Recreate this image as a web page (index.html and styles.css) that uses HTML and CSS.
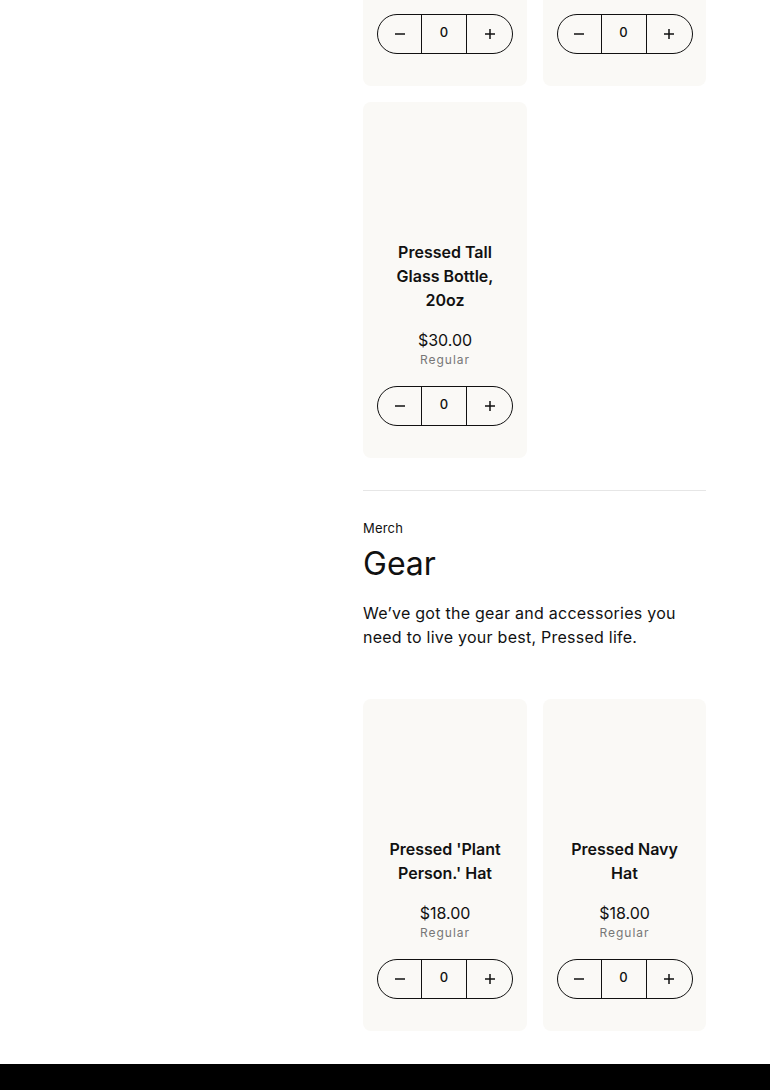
FILE: index.html
```html
<!DOCTYPE html>
<html lang="en">
<head>
<meta charset="utf-8">
<title>Pressed Shop</title>
<link rel="stylesheet" href="styles.css">
</head>
<body>
<div class="page">
  <aside class="sidebar"></aside>
  <main class="main">
    <section class="section">
      <div class="grid">
        <div class="card card-partial">
          <div class="qty">
            <button class="qty-btn" aria-label="Decrease"><svg width="12" height="12" viewBox="0 0 12 12"><path d="M1 6h10" stroke="#111" stroke-width="1.5"/></svg></button>
            <span class="qty-val">0</span>
            <button class="qty-btn" aria-label="Increase"><svg width="12" height="12" viewBox="0 0 12 12"><path d="M1 6h10M6 1v10" stroke="#111" stroke-width="1.5"/></svg></button>
          </div>
        </div>
        <div class="card card-partial">
          <div class="qty">
            <button class="qty-btn" aria-label="Decrease"><svg width="12" height="12" viewBox="0 0 12 12"><path d="M1 6h10" stroke="#111" stroke-width="1.5"/></svg></button>
            <span class="qty-val">0</span>
            <button class="qty-btn" aria-label="Increase"><svg width="12" height="12" viewBox="0 0 12 12"><path d="M1 6h10M6 1v10" stroke="#111" stroke-width="1.5"/></svg></button>
          </div>
        </div>
        <div class="card">
          <div class="card-media"></div>
          <h3 class="card-title">Pressed Tall Glass Bottle, 20oz</h3>
          <div class="card-price">$30.00</div>
          <div class="card-variant">Regular</div>
          <div class="qty">
            <button class="qty-btn" aria-label="Decrease"><svg width="12" height="12" viewBox="0 0 12 12"><path d="M1 6h10" stroke="#111" stroke-width="1.5"/></svg></button>
            <span class="qty-val">0</span>
            <button class="qty-btn" aria-label="Increase"><svg width="12" height="12" viewBox="0 0 12 12"><path d="M1 6h10M6 1v10" stroke="#111" stroke-width="1.5"/></svg></button>
          </div>
        </div>
      </div>
    </section>

    <hr class="divider">

    <section class="section">
      <div class="eyebrow">Merch</div>
      <h2 class="heading">Gear</h2>
      <p class="lead">We’ve got the gear and accessories you need to live your best, Pressed life.</p>
      <div class="grid grid-gear">
        <div class="card">
          <div class="card-media"></div>
          <h3 class="card-title">Pressed 'Plant Person.' Hat</h3>
          <div class="card-price">$18.00</div>
          <div class="card-variant">Regular</div>
          <div class="qty">
            <button class="qty-btn" aria-label="Decrease"><svg width="12" height="12" viewBox="0 0 12 12"><path d="M1 6h10" stroke="#111" stroke-width="1.5"/></svg></button>
            <span class="qty-val">0</span>
            <button class="qty-btn" aria-label="Increase"><svg width="12" height="12" viewBox="0 0 12 12"><path d="M1 6h10M6 1v10" stroke="#111" stroke-width="1.5"/></svg></button>
          </div>
        </div>
        <div class="card">
          <div class="card-media"></div>
          <h3 class="card-title">Pressed Navy Hat</h3>
          <div class="card-price">$18.00</div>
          <div class="card-variant">Regular</div>
          <div class="qty">
            <button class="qty-btn" aria-label="Decrease"><svg width="12" height="12" viewBox="0 0 12 12"><path d="M1 6h10" stroke="#111" stroke-width="1.5"/></svg></button>
            <span class="qty-val">0</span>
            <button class="qty-btn" aria-label="Increase"><svg width="12" height="12" viewBox="0 0 12 12"><path d="M1 6h10M6 1v10" stroke="#111" stroke-width="1.5"/></svg></button>
          </div>
        </div>
      </div>
    </section>
  </main>
</div>
<footer class="footer"></footer>
</body>
</html>
```

FILE: styles.css
```css
* { box-sizing: border-box; }
html, body { margin: 0; padding: 0; background: #fff; }
body {
  font-family: "Inter", "Liberation Sans", sans-serif;
  color: #111;
  overflow: hidden;
}
.page { display: flex; }
.sidebar { width: 363px; flex: none; }
.main { width: 343px; flex: none; }

.grid {
  display: grid;
  grid-template-columns: 164px 163px;
  column-gap: 16px;
  row-gap: 16px;
}

.card {
  background: #faf9f6;
  border-radius: 8px;
  padding: 16px 14px 32px;
  display: flex;
  flex-direction: column;
  align-items: center;
  text-align: center;
}
.card-partial {
  border-radius: 0 0 8px 8px;
  padding-top: 14px;
}
.card-media { height: 122px; width: 100%; }
.card-title {
  margin: 0;
  font-size: 16px;
  line-height: 24px;
  font-weight: 600;
  letter-spacing: 0;
  padding: 0 6px;
}
.card-price {
  margin-top: 16px;
  font-size: 16px;
  line-height: 24px;
  font-weight: 400;
}
.card-variant {
  font-size: 12px;
  line-height: 16px;
  color: #777;
  letter-spacing: 1px;
}
.qty {
  display: flex;
  width: 136px;
  height: 40px;
  border: 1px solid #111;
  border-radius: 20px;
  overflow: hidden;
}
.card-variant + .qty { margin-top: 18px; }
.qty-btn {
  flex: none;
  width: 45px;
  border: 0;
  background: transparent;
  padding: 0;
  display: flex;
  align-items: center;
  justify-content: center;
}
.qty-btn:first-child { width: 43px; }
.qty-val {
  flex: 1;
  border-left: 1px solid #111;
  border-right: 1px solid #111;
  font-size: 13px;
  line-height: 34px;
  text-align: center;
  font-weight: 500;
}

.divider {
  border: 0;
  border-top: 1px solid #e6e6e6;
  margin: 32px 0 0;
}
.eyebrow {
  margin-top: 29px;
  font-size: 13px;
  line-height: 16px;
  letter-spacing: 0.2px;
}
.heading {
  margin: 8px 0 0;
  font-size: 32px;
  line-height: 40px;
  font-weight: 400;
}
.lead {
  margin: 17px 0 0;
  font-size: 16px;
  line-height: 24px;
  letter-spacing: 0.25px;
}
.grid-gear { margin-top: 50px; }

.footer {
  margin-top: 33px;
  height: 200px;
  background: #000;
}
```
